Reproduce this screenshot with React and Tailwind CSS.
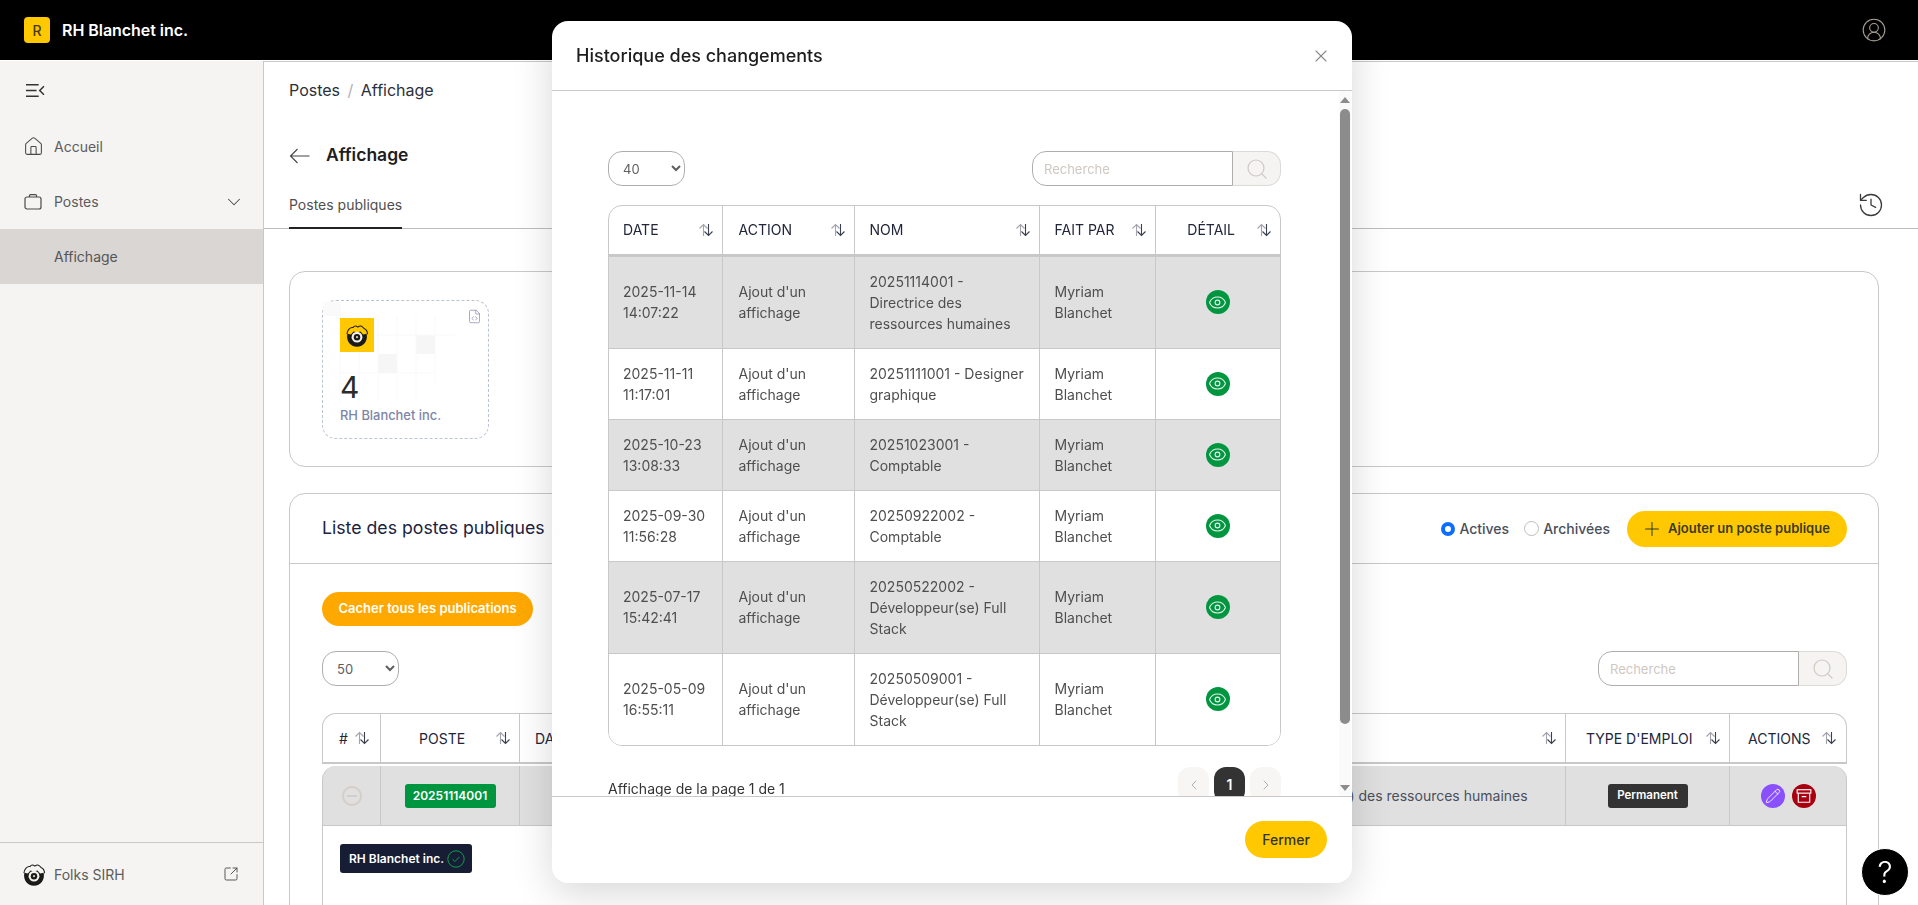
import { CircleUserRound, Eye, History, House, Pencil, Plus, Search, SquareArrowOutUpRight, X, ChevronDown, ChevronLeft, ChevronRight, FileCode } from 'lucide-react';

const rows = [
  { date: ['2025-11-14', '14:07:22'], nom: ['20251114001 -', 'Directrice des', 'ressources humaines'], on: true },
  { date: ['2025-11-11', '11:17:01'], nom: ['20251111001 - Designer', 'graphique'] },
  { date: ['2025-10-23', '13:08:33'], nom: ['20251023001 -', 'Comptable'], on: true },
  { date: ['2025-09-30', '11:56:28'], nom: ['20250922002 -', 'Comptable'] },
  { date: ['2025-07-17', '15:42:41'], nom: ['20250522002 -', 'Développeur(se) Full', 'Stack'], on: true },
  { date: ['2025-05-09', '16:55:11'], nom: ['20250509001 -', 'Développeur(se) Full', 'Stack'] },
];

const modalHeads = [
  { label: 'DATE', pad: 'pl-[14px]' },
  { label: 'ACTION', pad: 'pl-[16px]' },
  { label: 'NOM', pad: 'pl-[15px]' },
  { label: 'FAIT PAR', pad: 'pl-[15px]' },
];

function FolksLogo({ className }) {
  return (
    <svg viewBox="0 0 32 32" className={className}>
      <path d="M4.500 15C5 10 8 7 11.500 7.500 13 5 15 5.500 17 7c3-2.500 5.500-1 7 1.500 2.500 1 4 3.500 4 6.500" fill="none" stroke="#1a1a1a" strokeWidth="1.200" />
      <path d="M5 14.500l4 1 3-3.500 4 1 4-1 3 3.500 4-1c1.800 8-3.500 15-11 15S3.200 22.500 5 14.500z" fill="#1a1a1a" />
      <circle cx="16" cy="18.500" r="6.200" fill="#f5f1e6" />
      <circle cx="16" cy="18.500" r="3.700" fill="#1a1a1a" />
      <circle cx="16" cy="18.500" r="1.300" fill="#cfcabb" />
    </svg>
  );
}

function SortIcon({ className = '' }) {
  return (
    <svg viewBox="0 0 16 16" fill="none" className={`w-4 h-4 shrink-0 ${className}`}>
      <path d="M5.500 14V2.500M1.500 6.500l4-4 4 4" stroke="#a3a3ad" strokeWidth="1.100" />
      <path d="M10.500 2v11.500M6.500 9.500l4 4 4-4" stroke="#3b3f52" strokeWidth="1.100" />
    </svg>
  );
}

function Briefcase() {
  return (
    <svg viewBox="0 0 18 18" fill="none" stroke="#4a4a4a" strokeWidth="1.200" className="w-[18px] h-[18px]">
      <rect x="1" y="4" width="16" height="12" rx="2" />
      <path d="M5.500 4V2.600c0-.6.4-1 1-1h5c.6 0 1 .4 1 1V4" />
    </svg>
  );
}

function SearchBox() {
  return (
    <div className="flex h-[35px]">
      <input
        placeholder="Recherche"
        className="w-[201px] h-full rounded-l-[14px] border border-[#aeaeae] bg-white pl-[11px] text-[13px] outline-none placeholder:text-[#cfc8c3]"
      />
      <div className="w-[49px] h-full -ml-px rounded-r-[14px] border border-l-[#aeaeae] border-[#dcdad7] bg-[#f5f4f2] grid place-items-center">
        <Search className="w-[24px] h-[24px] text-[#d0c8c2]" strokeWidth={1.200} />
      </div>
    </div>
  );
}

function PageSelect({ value, width }) {
  return (
    <select defaultValue={value} className={`${width} h-[35px] rounded-[14px] border border-[#aeaeae] bg-white pl-[10px] text-[13px] text-[#5e5e5e]`}>
      <option value={value}>{value}</option>
    </select>
  );
}

function HistoryModal() {
  return (
    <div className="fixed left-[552px] top-[21px] w-[800px] h-[862px] rounded-[16px] bg-white shadow-[0_10px_40px_rgba(0,0,0,0.16)] flex flex-col">
      <div className="h-[70px] shrink-0 border-b border-[#c8c8c8] flex items-center justify-between pl-[24px] pr-[21px]">
        <h2 className="text-[18px] font-medium text-[#1d1d1d]">Historique des changements</h2>
        <X className="w-[20px] h-[20px] text-[#8a8a8a]" strokeWidth={1.300} />
      </div>

      <div className="relative flex-1 overflow-hidden pl-[56px] pr-[71px] pt-[60px]">
        <div className="flex justify-between">
          <PageSelect value="40" width="w-[77px]" />
          <SearchBox />
        </div>

        <div className="mt-[19px] rounded-[14px] border border-[#c8c8c8] overflow-hidden">
          <table className="w-full table-fixed border-collapse text-[14px] text-[#4f4f4f]">
            <colgroup>
              <col className="w-[113px]" />
              <col className="w-[132px]" />
              <col className="w-[185px]" />
              <col className="w-[116px]" />
              <col />
            </colgroup>
            <thead>
              <tr className="h-[49px] border-b-[3px] border-[#c8c8c8] text-[#22263a] text-[14px] font-normal">
                {modalHeads.map((h) => (
                  <th key={h.label} className={`border-r border-[#c8c8c8] ${h.pad} pr-[8px] font-normal text-left`}>
                    <div className="flex items-center justify-between">
                      {h.label}
                      <SortIcon />
                    </div>
                  </th>
                ))}
                <th className="pr-[8px] font-normal">
                  <div className="flex items-center justify-end gap-[21px]">
                    DÉTAIL
                    <SortIcon />
                  </div>
                </th>
              </tr>
            </thead>
            <tbody>
              {rows.map((r) => (
                <tr key={r.nom[0]} className={`border-b border-[#c8c8c8] last:border-b-0 ${r.on ? 'bg-[#e0e0e0]' : 'bg-white'}`}>
                  <td className="border-r border-[#c8c8c8] pl-[14px] py-[14px] leading-[21px]">
                    {r.date.map((d) => <div key={d}>{d}</div>)}
                  </td>
                  <td className="border-r border-[#c8c8c8] pl-[16px] py-[14px] leading-[21px]">
                    <div>Ajout d'un</div>
                    <div>affichage</div>
                  </td>
                  <td className="border-r border-[#c8c8c8] pl-[15px] py-[14px] leading-[21px]">
                    {r.nom.map((n) => <div key={n}>{n}</div>)}
                  </td>
                  <td className="border-r border-[#c8c8c8] pl-[15px] py-[14px] leading-[21px]">
                    <div>Myriam</div>
                    <div>Blanchet</div>
                  </td>
                  <td>
                    <div className="w-[24px] h-[24px] mx-auto rounded-full bg-[#009640] grid place-items-center">
                      <Eye className="w-[19px] h-[19px] text-[#e6f5ec]" strokeWidth={1.400} />
                    </div>
                  </td>
                </tr>
              ))}
            </tbody>
          </table>
        </div>

        <div className="mt-[21px] flex justify-between items-start">
          <p className="pt-[11px] text-[14px] text-[#333]">Affichage de la page 1 de 1</p>
          <div className="flex gap-[5px]">
            <div className="w-[31px] h-[36px] rounded-[12px] bg-[#f7f6f5] grid place-items-center">
              <ChevronLeft className="w-4 h-4 text-[#b5b0ac]" strokeWidth={1.500} />
            </div>
            <div className="w-[31px] h-[36px] rounded-[12px] bg-[#333] grid place-items-center text-[14px] font-semibold text-white">1</div>
            <div className="w-[31px] h-[36px] rounded-[12px] bg-[#f7f6f5] grid place-items-center">
              <ChevronRight className="w-4 h-4 text-[#b5b0ac]" strokeWidth={1.500} />
            </div>
          </div>
        </div>

        {/* fake classic scrollbar, sits over the scroll area */}
        <div className="absolute right-[1px] top-0 bottom-0 w-[12px] bg-[#fafafa]">
          <svg viewBox="0 0 10 6" className="absolute top-[6px] left-[1px] w-[10px] h-[6px]"><path d="M5 0l5 6H0z" fill="#8c8c8c" /></svg>
          <div className="absolute top-[18px] left-[1px] w-[10px] h-[615px] rounded-full bg-[#8c8c8c]" />
          <svg viewBox="0 0 10 6" className="absolute bottom-[5px] left-[1px] w-[10px] h-[6px]"><path d="M5 6L0 0h10z" fill="#8c8c8c" /></svg>
        </div>
      </div>

      <div className="h-[87px] shrink-0 border-t border-[#c8c8c8] flex justify-end pt-[24px] pr-[25px]">
        <button className="w-[82px] h-[37px] rounded-full bg-[#ffc800] text-[14px] font-medium text-[#333]">Fermer</button>
      </div>
    </div>
  );
}

export default function App() {
  return (
    <div className="h-screen overflow-hidden flex flex-col bg-white [font-family:Inter,sans-serif]">
      <header className="h-[60px] shrink-0 bg-black flex items-center justify-between pl-[24px] pr-[31px]">
        <div className="flex items-center gap-[12px]">
          <div className="w-[26px] h-[26px] rounded-[4px] bg-[#ffc800] grid place-items-center text-[14px] font-medium text-[#4a3a10]">R</div>
          <span className="text-[16px] font-semibold text-white tracking-[-0.05px]">RH Blanchet inc.</span>
        </div>
        <CircleUserRound className="w-[26px] h-[26px] text-[#a89f96]" strokeWidth={1} />
      </header>

      <div className="flex flex-1 min-h-0 mt-px">
        <aside className="w-[264px] shrink-0 bg-[#f5f4f2] border-r border-[#c8c8c8] flex flex-col text-[14px] text-[#5c5c5c]">
          <div className="h-[58px] flex items-center pl-[26px] pt-[1px]">
            <svg viewBox="0 0 18 14" fill="none" stroke="#333" strokeWidth="1.400" className="w-[19px] h-[15px]">
              <path d="M0 1.500h12M0 7h10M0 12.500h12M17 3l-4 4 4 4" />
            </svg>
          </div>
          <div className="h-[55px] flex items-center gap-[10px] pl-[23px]">
            <House className="w-[21px] h-[21px] text-[#4a4a4a]" strokeWidth={1.200} />
            Accueil
          </div>
          <div className="h-[55px] flex items-center gap-[12px] pl-[24px] pr-[18px]">
            <Briefcase />
            <span className="flex-1">Postes</span>
            <ChevronDown className="w-[22px] h-[22px] text-[#4a4a4a]" strokeWidth={1.100} />
          </div>
          <div className="h-[55px] flex items-center pl-[54px] bg-[#d9d6d3] text-[#555]">Affichage</div>
          <div className="mt-auto h-[63px] border-t border-[#c8c8c8] flex items-center gap-[6px] pl-[20px] pr-[24px]">
            <FolksLogo className="w-[28px] h-[28px] shrink-0" />
            <span className="flex-1">Folks SIRH</span>
            <SquareArrowOutUpRight className="w-[16px] h-[16px] text-[#3f3f3f]" strokeWidth={1.300} />
          </div>
        </aside>

        <main className="flex-1 min-w-0 border-t border-[#c8c8c8] overflow-hidden">
          <div className="h-[56px] flex items-center gap-[7.500px] pl-[25px] text-[16px] text-[#2b2f3a]">
            Postes <span className="text-[#b5b0ac]">/</span> Affichage
          </div>
          <div className="h-[74px] flex items-center gap-[16px] pl-[25px] pt-[1px]">
            <svg viewBox="0 0 20 16" fill="none" stroke="#444" strokeWidth="1.100" className="w-[21px] h-[16px]">
              <path d="M20 8H1M8 1L1 8l7 7" />
            </svg>
            <h1 className="text-[17.500px] font-semibold text-[#1d1d1d]">Affichage</h1>
          </div>
          <div className="h-[37px] border-b border-[#bdbdbd] flex justify-between pl-[25px] pr-[33px]">
            <div className="h-[37px] border-b-2 border-[#222] text-[14px] text-[#4f4f4f] pt-[2px]">Postes publiques</div>
            <History className="w-[28px] h-[28px] text-[#3a3a3a] -mt-[1px]" strokeWidth={1.100} />
          </div>

          <div className="pl-[25px] pr-[39px] pt-[42px]">
            <section className="h-[196px] rounded-[16px] border border-[#c8c8c8] pl-[32px] pt-[28px]">
              <div className="relative w-[167px] h-[139px] rounded-[14px] border border-dashed border-[#bcc2d8] pl-[17px] pt-[17px]">
                <svg viewBox="0 0 140 100" fill="none" className="absolute left-[1px] top-[1px] w-[140px] h-[100px]">
                  <rect x="0" y="0" width="17" height="14" fill="#fafafa" />
                  <rect x="54" y="52" width="19" height="19" fill="#f6f6f6" />
                  <rect x="92" y="33" width="19" height="19" fill="#f6f6f6" />
                  <path d="M16 14v86M35 14v86M54 14v86M73 14v86M92 14v86M111 14v70M16 33h115M16 71h95" stroke="#f9f9f9" />
                </svg>
                <FileCode className="absolute right-[6px] top-[8px] w-[15px] h-[15px] text-[#8a7fa8]" strokeWidth={1.100} />
                <div className="relative w-[34px] h-[34px] bg-[#ffc800] p-[3px]">
                  <FolksLogo className="w-full h-full" />
                </div>
                <div className="relative mt-[17px] text-[30px] leading-[36px] text-[#2b2b2b]">4</div>
                <div className="relative mt-[2px] text-[12.900px] leading-[18px] font-medium text-[#7e86a8]">RH Blanchet inc.</div>
              </div>
            </section>

            <section className="mt-[26px] rounded-t-[16px] border border-[#c8c8c8] h-[600px]">
              <div className="h-[70px] border-b border-[#c8c8c8] flex items-center pl-[32px] pr-[31px]">
                <h3 className="flex-1 text-[17.700px] text-[#1c2340]">Liste des postes publiques</h3>
                <span className="w-[14px] h-[14px] rounded-full border-[4px] border-[#0d6efd] bg-white" />
                <span className="ml-[4px] text-[14px] font-medium text-[#4a4f5c]">Actives</span>
                <span className="ml-[15px] w-[15px] h-[15px] rounded-full border border-[#bdbdbd] bg-white" />
                <span className="ml-[4px] text-[14px] font-medium text-[#4a4f5c]">Archivées</span>
                <button className="ml-[17px] w-[220px] h-[36px] rounded-full bg-[#ffc800] flex items-center pl-[14px] gap-[5px] text-[13px] font-semibold text-[#3c3a2c]">
                  <Plus className="w-[22px] h-[22px] text-[#2a3a20]" strokeWidth={1.100} />
                  Ajouter un poste publique
                </button>
              </div>

              <div className="pl-[32px] pr-[31px]">
                <button className="mt-[28px] block w-[211px] h-[34px] rounded-full bg-[#ffa800] text-[13px] font-semibold text-white">
                  Cacher tous les publications
                </button>
                <div className="mt-[25px] flex justify-between">
                  <PageSelect value="50" width="w-[77px]" />
                  <SearchBox />
                </div>

                <div className="mt-[27px] h-[51px] rounded-t-[14px] border border-b-2 border-[#c8c8c8] flex items-center text-[14px] text-[#22263a]">
                  <div className="w-[58px] h-full border-r border-[#c8c8c8] flex items-center gap-[6px] pl-[16px]">
                    # <SortIcon />
                  </div>
                  <div className="w-[139px] h-full border-r border-[#c8c8c8] flex items-center justify-between pl-[38px] pr-[8px]">
                    POSTE <SortIcon />
                  </div>
                  <div className="w-[714px] h-full border-r border-[#c8c8c8] flex items-center pl-[15px]">DATE</div>
                  <div className="w-[332px] h-full border-r border-[#c8c8c8] flex items-center justify-end pr-[8px]">
                    <SortIcon />
                  </div>
                  <div className="w-[164px] h-full border-r border-[#c8c8c8] flex items-center justify-between pl-[20px] pr-[8px] whitespace-nowrap">
                    TYPE D'EMPLOI <SortIcon />
                  </div>
                  <div className="flex-1 h-full flex items-center justify-between pl-[18px] pr-[9px]">
                    ACTIONS <SortIcon />
                  </div>
                </div>

                <div className="mt-[2px] h-[60px] rounded-t-[14px] bg-[#e0e0e0] border-x border-b border-[#c8c8c8] flex items-center text-[14px] text-[#4a4f5c]">
                  <div className="w-[58px] h-full border-r border-[#c8c8c8] grid place-items-center">
                    <div className="w-[20px] h-[20px] rounded-full border-2 border-[#d5cdc8] grid place-items-center">
                      <div className="w-[10px] h-[2px] bg-[#d5cdc8]" />
                    </div>
                  </div>
                  <div className="w-[139px] h-full border-r border-[#c8c8c8] grid place-items-center">
                    <span className="w-[91px] h-[24px] rounded-[3px] bg-[#009640] grid place-items-center text-[12px] font-semibold text-white">20251114001</span>
                  </div>
                  <div className="w-[714px] h-full border-r border-[#c8c8c8]" />
                  <div className="w-[332px] h-full border-r border-[#c8c8c8] flex items-center pl-[20px]">Directeur(trice) des ressources humaines</div>
                  <div className="w-[164px] h-full border-r border-[#c8c8c8] grid place-items-center">
                    <span className="w-[80px] h-[24px] rounded-[3px] bg-[#333] grid place-items-center text-[11.500px] font-semibold text-white">Permanent</span>
                  </div>
                  <div className="flex-1 flex justify-center gap-[7px]">
                    <div className="w-[24px] h-[24px] rounded-full bg-[#8950fc] grid place-items-center">
                      <Pencil className="w-[16px] h-[16px] text-white" strokeWidth={1.300} />
                    </div>
                    <div className="w-[24px] h-[24px] rounded-full bg-[#a80010] grid place-items-center">
                      <svg viewBox="0 0 14 14" fill="none" stroke="#fff" strokeWidth="1" className="w-[16px] h-[16px]">
                        <rect x="1" y="1.500" width="12" height="3" />
                        <path d="M2 4.500v8h10v-8M5 7.500h4" />
                      </svg>
                    </div>
                  </div>
                </div>

                <div className="h-[200px] border-x border-[#c8c8c8] pl-[17px] pt-[18px]">
                  <span className="inline-flex items-center gap-[3px] w-[132px] h-[29px] rounded-[3px] bg-[#161d35] pl-[9px] text-[12px] font-semibold text-white">
                    RH Blanchet inc.
                    <svg viewBox="0 0 18 18" fill="none" stroke="#0f9d4a" strokeWidth="1" className="w-[18px] h-[18px] shrink-0">
                      <circle cx="9" cy="9" r="8.200" />
                      <path d="M5.500 9.200l2.400 2.300 4.600-4.600" />
                    </svg>
                  </span>
                </div>
              </div>
            </section>
          </div>
        </main>
      </div>

      <HistoryModal />

      <div className="fixed left-[1861px] top-[848px] w-[48px] h-[48px] rounded-full bg-black border border-white grid place-items-center text-[30px] font-light text-white">?</div>
    </div>
  );
}
